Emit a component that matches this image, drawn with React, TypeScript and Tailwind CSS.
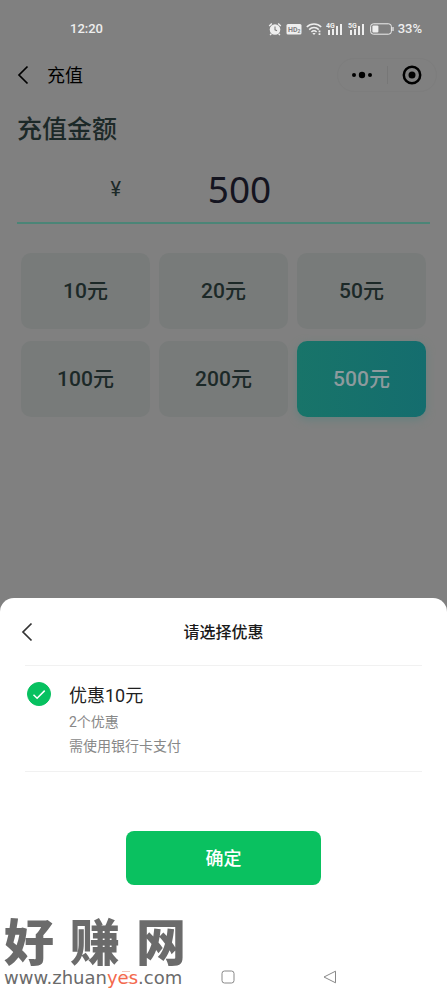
import { useState } from "react";

const amounts = [10, 20, 50, 100, 200, 500];

const ChevronLeft = () => (
  <svg width="12" height="20" viewBox="0 0 12 20" fill="none" stroke="currentColor" strokeWidth="1.7">
    <path d="M10.5 1.5 2 10l8.5 8.5" />
  </svg>
);

const SignalIcon = ({ label }: { label: string }) => (
  <svg width="18" height="14" viewBox="0 0 18 14" fill="currentColor">
    <text x="0" y="6" fontSize="7" fontWeight="700" fontFamily="Roboto, sans-serif">
      {label}
    </text>
    <rect x="2" y="8" width="2" height="5" />
    <rect x="6" y="7" width="2" height="6" />
    <rect x="10" y="4" width="2" height="9" />
    <rect x="14" y="2" width="2" height="11" />
  </svg>
);

const StatusBar = () => (
  <div className="flex h-[58px] items-center justify-between pr-[25px] pl-[70px] text-[13px] font-medium text-[#eeeeee]">
    <span>12:20</span>
    <div className="flex items-center gap-1">
      <svg width="14" height="14" viewBox="0 0 14 14" fill="none">
        <circle cx="7" cy="7.5" r="5.3" fill="currentColor" />
        <path d="M1.2 4 3.8 1.6M12.8 4l-2.6-2.4M3.3 11.7l-1.2 1.4M10.7 11.7l1.2 1.4" stroke="currentColor" strokeWidth="1.4" />
        <path d="M7 4.5v3.3l2 1" stroke="#808080" strokeWidth="1.1" />
      </svg>
      <svg width="16" height="14" viewBox="0 0 16 14">
        <rect x="0.5" y="2" width="15" height="10.5" rx="1.5" fill="currentColor" />
        <text x="2" y="10" fontSize="7" fontWeight="700" fontFamily="Roboto, sans-serif" fill="#808080">
          HD
        </text>
        <text x="11.5" y="10.5" fontSize="5" fontWeight="700" fontFamily="Roboto, sans-serif" fill="#808080">
          2
        </text>
      </svg>
      <svg width="16" height="14" viewBox="0 0 16 14" fill="none" stroke="currentColor" strokeWidth="1.5">
        <path d="M0.8 5c4-4 10.4-4 14.4 0M3.2 7.6c2.7-2.7 6.9-2.7 9.6 0M5.4 10c1.6-1.5 3.6-1.5 5.2 0" />
        <path d="m6.3 11 1.7 2 1.7-2Z" fill="currentColor" stroke="none" />
        <path d="M13.5 8.5v1.7M13.5 11.2v1.7" strokeWidth="1.8" />
      </svg>
      <SignalIcon label="4G" />
      <SignalIcon label="5G" />
      <svg width="24" height="12" viewBox="0 0 24 12" fill="none">
        <rect x="0.6" y="0.8" width="20.8" height="10.4" rx="2.8" stroke="currentColor" />
        <rect x="2.4" y="2.6" width="6" height="6.8" rx="1" fill="currentColor" />
        <path d="M23 4v4" stroke="currentColor" strokeWidth="1.2" />
      </svg>
      <span>33%</span>
    </div>
  </div>
);

const NavBar = () => (
  <header className="flex h-[34px] items-center pr-[10px] pl-[17px] text-black">
    <button aria-label="返回">
      <ChevronLeft />
    </button>
    <h1 className="ml-[18px] pt-0.5 text-lg">充值</h1>
    <div className="ml-auto flex h-[34px] w-[100px] items-center rounded-full border border-[#7d7d7d]">
      <button aria-label="更多" className="flex flex-1 justify-center">
        <svg width="22" height="8" viewBox="0 0 22 8" fill="currentColor">
          <circle cx="3" cy="4" r="2" />
          <circle cx="11" cy="4" r="3.2" />
          <circle cx="19" cy="4" r="2" />
        </svg>
      </button>
      <span className="h-[18px] w-px bg-[#777777]" />
      <button aria-label="关闭" className="flex flex-1 justify-center">
        <svg width="20" height="20" viewBox="0 0 20 20" fill="none">
          <circle cx="10" cy="10" r="8.2" stroke="currentColor" strokeWidth="2.5" />
          <circle cx="10" cy="10" r="3.5" fill="currentColor" />
        </svg>
      </button>
    </div>
  </header>
);

const Watermark = () => (
  <div className="pointer-events-none absolute bottom-3 left-1 text-[#6b6b6b]">
    <div className="flex gap-4 text-[50px] leading-[48px] font-black">
      <span>好</span>
      <span>赚</span>
      <span>网</span>
    </div>
    <div className="font-['DejaVu_Sans',sans-serif] text-[18px] leading-5">
      www.zhuan<span className="text-[#f4694c]">yes</span>.com
    </div>
  </div>
);

const App = () => {
  const [amount, setAmount] = useState("500");
  const [checked, setChecked] = useState(true);

  return (
    <div className="relative flex min-h-screen flex-col bg-[#808080] font-['Roboto','Noto_Sans_CJK_SC',sans-serif]">
      <StatusBar />
      <NavBar />

      <main className="flex-1 px-[17px] pt-5 pb-8">
        <label htmlFor="amount" className="block text-[25px] leading-9 font-medium text-[#1c2928]">
          充值金额
        </label>
        <div className="mt-2 flex h-[68px] items-center border-b-2 border-[#4b8577]">
          <span className="w-[108px] pr-1 text-right text-xl text-[#1c2928]">¥</span>
          <input
            id="amount"
            className="w-0 flex-1 bg-transparent pr-[76px] text-center font-['Noto_Sans',sans-serif] text-[37px] leading-[48px] text-[#14141f] outline-none"
            value={amount}
            onChange={(e) => setAmount(e.target.value)}
          />
        </div>

        <div className="mt-[29px] grid grid-cols-3 gap-x-[9px] gap-y-3 px-1">
          {amounts.map((value) => (
            <button
              key={value}
              className={`h-[76px] rounded-[10px] pt-0.5 text-[21px] font-medium ${
                amount === String(value)
                  ? "bg-linear-to-r from-[#187469] to-[#146d6e] text-[#8d9a9d] shadow-[0_3px_8px_#66807e]"
                  : "bg-[#787b7a] text-[#1c2928]"
              }`}
              onClick={() => setAmount(String(value))}>
              {value}元
            </button>
          ))}
        </div>
      </main>

      <section className="rounded-t-[14px] bg-white">
        <div className="grid h-[67px] grid-cols-3 items-center px-[21px]">
          <button aria-label="返回" className="justify-self-start text-[#333333]">
            <ChevronLeft />
          </button>
          <h2 className="pt-0.5 text-center text-base font-medium text-[#1a1a1a]">请选择优惠</h2>
        </div>

        <label className="mx-[25px] flex border-y border-[#f1f1f1] pt-[14px] pb-[13px]">
          <span className="relative mt-[2px] ml-[2px] h-6 w-6">
            <input
              type="checkbox"
              className="peer h-6 w-6 appearance-none rounded-full border border-[#cccccc] checked:border-[#07c160] checked:bg-[#07c160]"
              checked={checked}
              onChange={(e) => setChecked(e.target.checked)}
            />
            <svg
              className="pointer-events-none absolute inset-0 hidden peer-checked:block"
              width="24"
              height="24"
              viewBox="0 0 24 24"
              fill="none"
              stroke="white"
              strokeWidth="1.5">
              <path d="m6.5 12.8 3.6 3.5 7.6-7.7" />
            </svg>
          </span>
          <span className="ml-[18px] flex flex-col text-sm leading-6 text-[#888888]">
            <span className="pt-0.5 text-lg leading-7 text-[#1f1f1f]">优惠10元</span>
            <span>2个优惠</span>
            <span>需使用银行卡支付</span>
          </span>
        </label>

        <button className="mx-auto mt-[59px] block h-[54px] w-[195px] rounded-lg bg-[#0ac160] pt-0.5 text-lg font-medium text-white">
          确定
        </button>

        <div className="mt-[69px] flex h-[46px] items-center justify-center gap-[88px] pl-2 text-[#888888]">
          <button aria-label="最近任务" className="text-[#f3c4b8]">
            <svg width="14" height="14" viewBox="0 0 14 14" fill="none" stroke="currentColor">
              <path d="M3 1.5h8M1 7h12M3 12.5h8" />
            </svg>
          </button>
          <button aria-label="主页">
            <svg width="14" height="14" viewBox="0 0 14 14" fill="none" stroke="currentColor">
              <rect x="1" y="1" width="12" height="12" rx="2.5" />
            </svg>
          </button>
          <button aria-label="后退">
            <svg width="14" height="14" viewBox="0 0 14 14" fill="none" stroke="currentColor" strokeLinejoin="round">
              <path d="M12.5 1.2v11.6L1 7Z" />
            </svg>
          </button>
        </div>
      </section>

      <Watermark />
    </div>
  );
};

export default App;
